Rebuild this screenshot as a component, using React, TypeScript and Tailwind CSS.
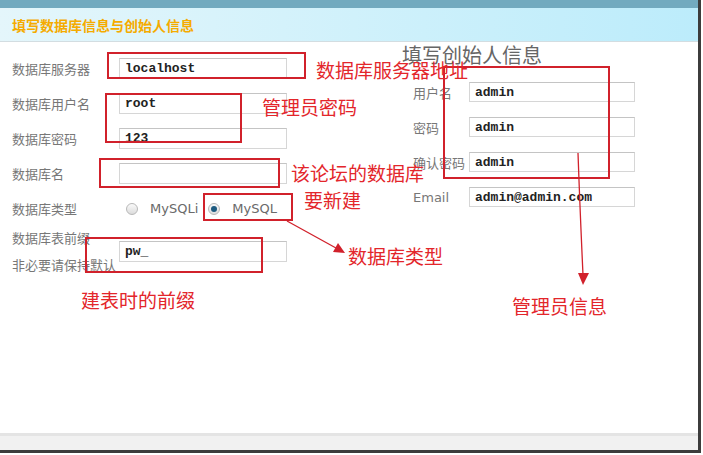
import React from 'react';

const cjk = '"Noto Sans CJK SC", "Noto Sans", sans-serif';
const mono = '"Liberation Mono", "Courier New", monospace';
const sans = '"DejaVu Sans", Verdana, sans-serif';

function Field({ value, size }: { value: string; size: string }) {
  return (
    <input
      readOnly
      defaultValue={value}
      className={`${size} border border-[#d6d6d6] border-t-[#c4c4c4] bg-white pl-[5px] text-[13px] font-bold text-[#222] outline-none`}
      style={{ fontFamily: mono }}
    />
  );
}

function Radio({ checked }: { checked?: boolean }) {
  return (
    <span className="w-[12px] h-[12px] rounded-full border border-[#b8b8b8] bg-gradient-to-b from-[#fafafa] to-[#dcdcdc] flex items-center justify-center">
      {checked && <span className="w-[6px] h-[6px] rounded-full bg-[#1d5b80]" />}
    </span>
  );
}

const leftRows = [
  { label: '数据库服务器', value: 'localhost' },
  { label: '数据库用户名', value: 'root' },
  { label: '数据库密码', value: '123' },
  { label: '数据库名', value: '' },
];

const rightRows = [
  { label: '用户名', value: 'admin' },
  { label: '密码', value: 'admin' },
  { label: '确认密码', value: 'admin' },
  { label: 'Email', value: 'admin@admin.com', latin: true },
];

// red marks drawn over the screenshot
const boxes = [
  'left-[107px] top-[52px] w-[199px] h-[27px]',
  'left-[105px] top-[93px] w-[137px] h-[50px]',
  'left-[99px] top-[158px] w-[181px] h-[30px]',
  'left-[203px] top-[193px] w-[90px] h-[28px]',
  'left-[85px] top-[237px] w-[178px] h-[36px]',
  'left-[443px] top-[66px] w-[167px] h-[113px]',
];

const notes = [
  { text: '数据库服务器地址', pos: 'left-[316px] top-[59px]' },
  { text: '管理员密码', pos: 'left-[262px] top-[96px]' },
  { text: '该论坛的数据库', pos: 'left-[291px] top-[162px]' },
  { text: '要新建', pos: 'left-[304px] top-[189px]' },
  { text: '数据库类型', pos: 'left-[348px] top-[245px]' },
  { text: '建表时的前缀', pos: 'left-[81px] top-[289px]' },
  { text: '管理员信息', pos: 'left-[512px] top-[295px]' },
];

export default function App() {
  return (
    <div className="relative w-[703px] h-[455px] bg-white overflow-hidden">
      <div className="w-[701px] h-[453px] border-r-[3px] border-b-[3px] border-[#3c3c3c] flex flex-col">
        {/* Header */}
        <div className="h-[8px] bg-[#72aabf]" />
        <div className="h-[34px] bg-gradient-to-r from-[#e4f6fb] to-[#bcecfb] border-b border-[#d3dde1] flex items-center pl-[12px]">
          <span className="text-[14px] font-bold text-[#f5ab00] leading-none" style={{ fontFamily: cjk }}>
            填写数据库信息与创始人信息
          </span>
        </div>

        {/* Body */}
        <div className="flex-1 flex">
          <div className="w-[402px] pl-[12px] pt-[16px] flex flex-col" style={{ fontFamily: cjk }}>
            {leftRows.map((row, i) => (
              <div key={row.label} className={`flex items-center ${i > 0 ? 'mt-[14px]' : ''}`}>
                <span className="w-[107px] text-[13px] text-[#777] leading-none">{row.label}</span>
                <Field value={row.value} size="w-[168px] h-[21px]" />
              </div>
            ))}
            <div className="flex items-center mt-[14px] h-[21px]">
              <span className="w-[107px] text-[13px] text-[#777] leading-none">数据库类型</span>
              <div className="flex items-center pl-[7px] text-[13px] text-[#6a6a6a]" style={{ fontFamily: sans }}>
                <Radio />
                <span className="ml-[12px]">MySQLi</span>
                <span className="ml-[10px]"><Radio checked /></span>
                <span className="ml-[12px]">MySQL</span>
              </div>
            </div>
            <div className="flex items-center mt-[5px]">
              <div className="w-[107px] text-[13px] text-[#777] leading-[27px] whitespace-nowrap">
                <div>数据库表前缀</div>
                <div>非必要请保持默认</div>
              </div>
              <Field value="pw_" size="w-[168px] h-[21px]" />
            </div>
          </div>

          <div className="flex-1 pt-[2px] flex flex-col" style={{ fontFamily: cjk }}>
            <div className="text-[20px] leading-[22px] text-[#666]">填写创始人信息</div>
            <div className="mt-[16px] pl-[11px] flex flex-col gap-[15px]">
              {rightRows.map((row) => (
                <div key={row.label} className="flex items-center">
                  <span
                    className="w-[56px] text-[13px] text-[#777] leading-none whitespace-nowrap"
                    style={row.latin ? { fontFamily: sans } : undefined}
                  >
                    {row.label}
                  </span>
                  <Field value={row.value} size="w-[166px] h-[20px]" />
                </div>
              ))}
            </div>
          </div>
        </div>

        {/* Footer */}
        <div className="h-[17px] bg-[#f1f1f1] border-t-[3px] border-[#e4e4e4]" />
      </div>

      {/* Annotations */}
      {boxes.map((b) => (
        <div key={b} className={`absolute ${b} border-2 border-[#d1212b]`} />
      ))}
      {notes.map((n) => (
        <div
          key={n.text}
          className={`absolute ${n.pos} text-[19px] leading-[22px] text-[#e3262b] whitespace-nowrap`}
          style={{ fontFamily: cjk }}
        >
          {n.text}
        </div>
      ))}
      <svg className="absolute left-0 top-0 pointer-events-none" width="703" height="455">
        <line x1="287" y1="221" x2="336" y2="248" stroke="#d1212b" strokeWidth="1.3" />
        <polygon points="345,253 333,252 338,243" fill="#d1212b" />
        <path d="M578 153 Q580 210 583 275" stroke="#d1212b" strokeWidth="1.3" fill="none" />
        <polygon points="583,285 578,273 589,273" fill="#d1212b" />
      </svg>
    </div>
  );
}
